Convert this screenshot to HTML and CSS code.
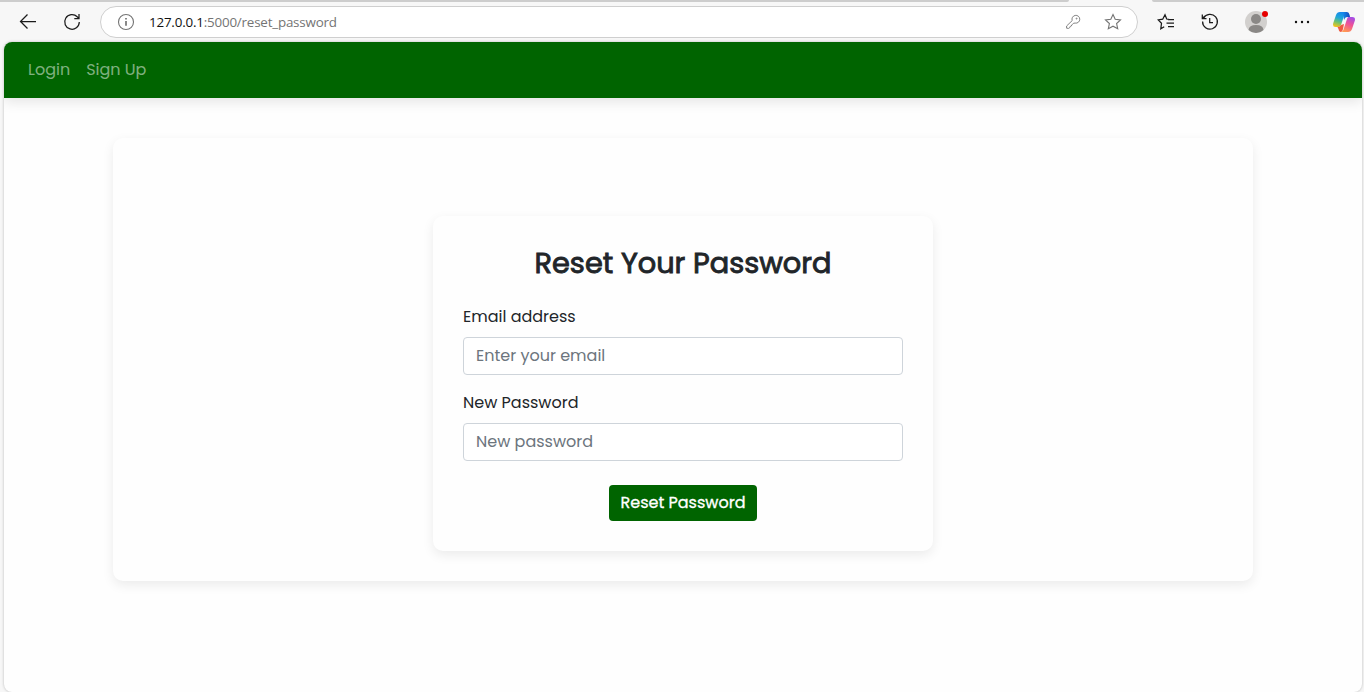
FILE: index.html
```html
<!DOCTYPE html>
<html lang="en">
<head>
<meta charset="utf-8">
<title>Reset Password</title>
<link rel="stylesheet" href="styles.css">
</head>
<body>
<div class="browser">
  <div class="tabstrip"><span class="strip-left"></span><span class="strip-right"></span></div>
  <header class="toolbar">
    <svg class="icon back" viewBox="0 0 18 18"><path d="M17 8.5H1.8M8.5 1.5L1.5 8.5L8.5 15.5"/></svg>
    <svg class="icon reload" viewBox="0 0 18 18"><path d="M16.3 9A7.3 7.3 0 1 1 14.2 3.8L15.8 5.3M16 1V5.5H11.3"/></svg>
    <div class="address">
      <svg class="icon info" viewBox="0 0 18 18"><circle cx="9" cy="9" r="7.5"/><path class="thick" d="M9 8V12.7M9 5V6.4"/></svg>
      <span class="url"><span class="host">127.0.0.1</span>:5000/reset_password</span>
      <svg class="icon key" viewBox="0 0 18 18"><path d="M8.2 7.6A3.9 3.9 0 1 1 11.2 10.1L9.6 10.2L8.5 11.4L7.8 11.8L7.4 13L6.2 13.4L5.6 14.8L4.6 15.4L2.6 15.2V13L8.2 7.6Z"/><circle cx="12.6" cy="5.6" r=".5"/></svg>
      <svg class="icon star" viewBox="0 0 18 18"><path d="M9 1.5L11.2 6.3L16.5 6.9L12.6 10.5L13.7 15.8L9 13.2L4.3 15.8L5.4 10.5L1.5 6.9L6.8 6.3Z"/></svg>
    </div>
    <svg class="icon favorites" viewBox="0 0 18 18"><path d="M12 6.4L9.7 6L8 1.7L5.7 6.2L1.2 6.9L4.5 10.3L3.8 15.7L7.2 13.7M11 6.5H17M9.5 10H17M11 13.5H17"/></svg>
    <svg class="icon history" viewBox="0 0 18 18"><path d="M1.6 8.5A7.4 7.4 0 1 0 2.5 5.2M1.3 1.5V5.5H5.5M2 5A7.5 7.5 0 0 1 5 2.7M8.7 5V9.5H12"/></svg>
    <svg class="avatar" viewBox="0 0 24 24"><circle cx="11" cy="12" r="11" fill="#d2d0ce"/><circle cx="11" cy="9" r="5" fill="#8a8886"/><path d="M3.5 20Q4 15 11 15T18.5 20A11 11 0 0 1 3.5 20Z" fill="#8a8886"/><circle cx="20" cy="4" r="3" fill="#e60000"/></svg>
    <svg class="dots" viewBox="0 0 18 18"><circle cx="3" cy="9" r="1.2"/><circle cx="9" cy="9" r="1.2"/><circle cx="15" cy="9" r="1.2"/></svg>
    <svg class="copilot" viewBox="0 0 22 20">
      <defs>
        <linearGradient id="blue" x1=".6" y1="0" x2=".3" y2="1"><stop stop-color="#1585ef"/><stop offset=".4" stop-color="#20a7d7"/><stop offset=".7" stop-color="#70c36e"/><stop offset="1" stop-color="#f3c31b"/></linearGradient>
        <linearGradient id="pink" x1=".7" y1="0" x2=".3" y2="1"><stop stop-color="#a44de5"/><stop offset=".45" stop-color="#ef5197"/><stop offset="1" stop-color="#ff9b50"/></linearGradient>
        <linearGradient id="navy"><stop stop-color="#1689e8"/><stop offset="1" stop-color="#1747bd"/></linearGradient>
      </defs>
      <path fill="url(#blue)" d="M7 0H14Q12 0 11 4L8 13Q7.2 15 5 15H2.5Q-.7 15 .2 11.2L3 3Q4 0 7 0Z"/>
      <path fill="url(#navy)" d="M10 0H14Q16 0 16.6 3L17 5H14Q12 5 11 8Z"/>
      <path fill="url(#pink)" d="M15.5 5H19.2Q22.7 5 21.8 8.8L19 17Q18 20 15 20H8Q10 20 11 16L14 7Q14.5 5 15.5 5Z"/>
      <path fill="#ef5a42" d="M4.5 15Q7.2 15 8 13L11 12L10 17Q9.5 20 8 20Q6 20 5.5 17Z"/>
    </svg>
  </header>
  <div class="page">
    <nav class="navbar"><a class="login">Login</a><a class="signup">Sign Up</a></nav>
    <main class="container">
      <form class="card">
        <h2 class="title">Reset Your Password</h2>
        <label class="label" for="email">Email address</label>
        <input class="field" id="email" type="email" placeholder="Enter your email">
        <label class="label label-pass" for="password">New Password</label>
        <input class="field" id="password" type="password" placeholder="New password">
        <button class="submit" type="button">Reset Password</button>
      </form>
    </main>
  </div>
</div>
</body>
</html>
```

FILE: styles.css
```css
* { box-sizing: border-box; }
body { margin: 0; background: #f7f7f7; font-family: Poppins, Inter, sans-serif; color: #212529; }
.browser { height: 692px; overflow: hidden; display: flex; flex-direction: column; }
.tabstrip { height: 2px; display: flex; justify-content: space-between; flex: none; }
.strip-left { width: 1069px; background: #cdcdcd; border-bottom-right-radius: 3px; }
.strip-right { width: 212px; background: #cdcdcd; border-bottom-left-radius: 3px; }
.toolbar { height: 40px; flex: none; display: flex; align-items: center; padding: 0 9px 0 19px; }
.icon { width: 18px; height: 18px; flex: none; fill: none; stroke: #1b1b1b; stroke-width: 1.25; }
.reload { margin-left: 26px; }
.address { width: 1038px; height: 32px; margin-left: 19px; border: 1px solid #cfcfcf; border-radius: 16px; background: #fff; display: flex; align-items: center; padding: 0 15px 0 16px; }
.address .icon { stroke: #747474; stroke-width: 1.1; }
.address .key { stroke-width: .9; }
.address .icon .thick { stroke-width: 1.7; }
.url { font: 13.4px/20px "Open Sans", sans-serif; color: #747474; margin-left: 14px; flex: 1; white-space: nowrap; letter-spacing: -.2px; }
.host { color: #111; }
.star { margin-left: 22px; }
.favorites { margin-left: 19px; }
.history { margin-left: 26px; }
.avatar { width: 24px; height: 24px; margin-left: 26px; }
.dots { width: 18px; height: 18px; margin-left: 24px; fill: #111; }
.copilot { width: 22px; height: 20px; margin-left: 22px; }
.page { flex: 1; margin: 0 2px 0 4px; background: #fefefe; border-radius: 8px; overflow: hidden; box-shadow: 0 0 3px rgba(0,0,0,.25); }
.navbar { height: 56px; background: #006400; box-shadow: 0 4px 12px rgba(0,0,0,.1); display: flex; align-items: center; padding-left: 24px; gap: 16px; font-size: 16px; color: rgba(255,255,255,.5); }
.container { width: 1140px; height: 443px; margin: 40px 109px 0; padding-top: 78px; border-radius: 10px; box-shadow: 0 4px 12px rgba(0,0,0,.08); background: #fefefe; }
.navbar a { white-space: nowrap; line-height: 24px; }
.card { width: 500px; height: 335px; margin: 0 auto; padding: 30px; border-radius: 10px; background: #fefefe; box-shadow: 0 4px 12px rgba(0,0,0,.08); display: flex; flex-direction: column; }
.title { margin: 0; font-size: 28.8px; line-height: 35px; font-weight: 400; -webkit-text-stroke: .9px #212529; text-align: center; white-space: nowrap; }
.label { margin-top: 24px; font-size: 16px; line-height: 24px; align-self: flex-start; white-space: nowrap; }
.label-pass { margin-top: 16px; }
.field { margin-top: 8px; height: 38px; flex: none; border: 1px solid #ced4da; border-radius: 4px; background: #fff; padding: 5px 12px 7px; font: 16px/24px Poppins, Inter, sans-serif; }
.field::placeholder { color: #6c757d; opacity: 1; }
.submit { width: 148px; height: 36px; margin: 24px auto 0; padding: 0; border: 0; border-radius: 4px; background: #006400; color: #fff; font: 400 16px/24px Poppins, Inter, sans-serif; -webkit-text-stroke: .3px #fff; white-space: nowrap; }
```
